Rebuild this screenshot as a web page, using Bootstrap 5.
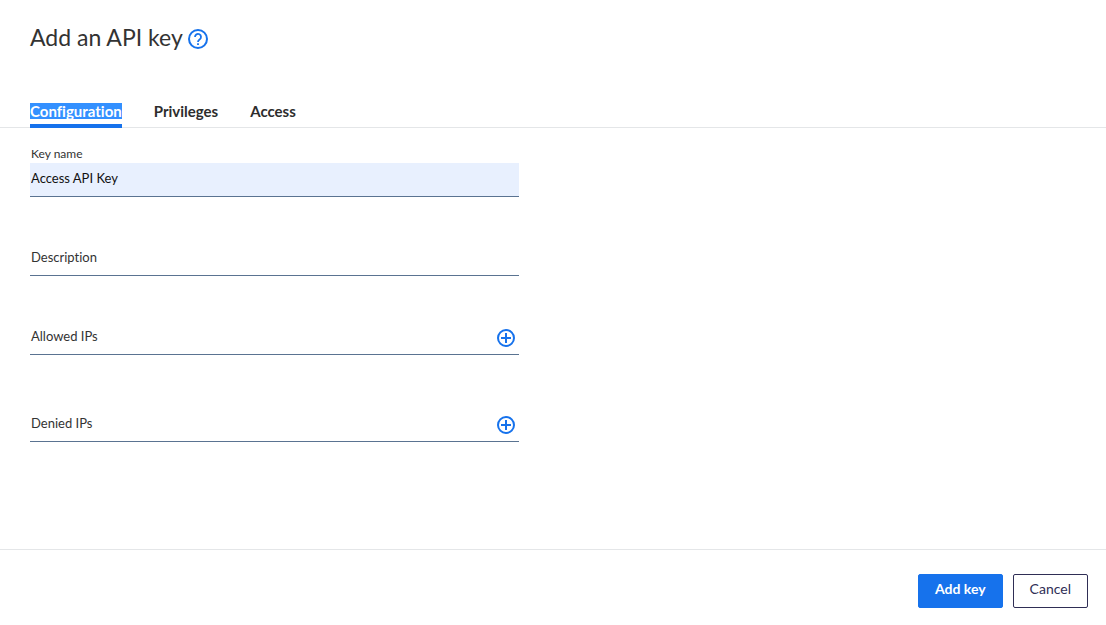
<!DOCTYPE html>
<html lang="en">
<head>
<meta charset="utf-8">
<meta name="viewport" content="width=device-width, initial-scale=1">
<title>Add an API key</title>
<link href="https://cdn.jsdelivr.net/npm/bootstrap@5.3.0/dist/css/bootstrap.min.css" rel="stylesheet">
<style>
  body { font-family: Lato, sans-serif; font-size: 13px; line-height: 20px; color: #333; font-variant-ligatures: none; }
  svg { display: block; }
  .page-head { padding: 21px 30px 0; gap: 5px; }
  .page-title { font-size: 23px; line-height: 32px; font-weight: 400; }
  .icon-btn { border: 0; background: none; padding: 0; color: #1672ec; }
  .tab-bar { margin-top: 48px; padding: 0 30px; gap: 32px; border-bottom: 1px solid #e4e6e8; }
  .tab-bar .nav-link { padding: 2px 0 5px; margin-bottom: -1px; font-size: 15px; line-height: 16px; font-weight: 700; color: #2d2d2d; border-bottom: 4px solid transparent; }
  .tab-bar .nav-link.active { border-bottom-color: #1672ec; color: #fff; }
  .picked { background: #3390ff; display: block; }
  .form-area { padding: 16px 34px 0 30px; }
  .form-area label { padding-left: 1px; }
  .top-label { font-size: 12px; line-height: 19px; display: block; }
  .line-field { height: 34px; border-bottom: 1px solid #5a7391; padding-bottom: 3px; margin-bottom: 45px; }
  .line-field.tall { margin-bottom: 53px; }
  .line-field input { border: 0; outline: 0; background: transparent; padding: 0 0 0 1px; min-width: 0; color: #111; }
  .line-field .icon-btn { margin: 3px 4px 0 0; }
  .filled { background: #e8f0fe; }
  .page-foot { border-top: 1px solid #e4e6e8; padding: 24px 18px 17px; gap: 10px; }
  .page-foot .btn { height: 34px; padding: 0 16px 4px; font-size: 14px; line-height: 20px; border-radius: 2px; }
  .btn-add { background: #1672ec; border-color: #1672ec; color: #fff; font-weight: 700; }
  .btn-cancel { background: #fff; border-color: #2f2e55; color: #2f2e55; }
</style>
</head>
<body class="d-flex flex-column min-vh-100">
<header>
  <div class="page-head d-flex align-items-center">
    <h1 class="page-title mb-0">Add an API key</h1>
    <button class="icon-btn mt-1" type="button" aria-label="Help">
      <svg width="20" height="20" viewBox="0 0 20 20" fill="none" stroke="currentColor" stroke-width="2"><circle cx="10" cy="10" r="9"/><path d="M7 8a3 3 0 1 1 4.600 2.500C10.500 11.200 10 11.600 10 13M10 14.200v1.900" stroke-width="1.800"/></svg>
    </button>
  </div>
  <nav class="nav tab-bar">
    <a class="nav-link active" href="#configuration" aria-current="page"><span class="picked">Configuration</span></a>
    <a class="nav-link" href="#privileges">Privileges</a>
    <a class="nav-link" href="#access">Access</a>
  </nav>
</header>
<main class="flex-grow-1">
  <form class="row g-0" id="key-form">
    <div class="col-6 form-area">
      <label class="top-label" for="key-name">Key name</label>
      <div class="line-field filled d-flex align-items-center">
        <input class="flex-grow-1" id="key-name" type="text" value="Access API Key">
      </div>
      <div class="line-field d-flex align-items-center">
        <label for="description">Description</label>
        <input class="flex-grow-1" id="description" type="text">
      </div>
      <div class="line-field tall d-flex align-items-center">
        <label for="allowed">Allowed IPs</label>
        <input class="flex-grow-1" id="allowed" type="text">
        <button class="icon-btn" type="button" aria-label="Add allowed IP">
          <svg width="18" height="18" viewBox="0 0 18 18" fill="none" stroke="currentColor" stroke-width="2"><circle cx="9" cy="9" r="8"/><path d="M9 4v10M4 9h10"/></svg>
        </button>
      </div>
      <div class="line-field d-flex align-items-center">
        <label for="denied">Denied IPs</label>
        <input class="flex-grow-1" id="denied" type="text">
        <button class="icon-btn" type="button" aria-label="Add denied IP">
          <svg width="18" height="18" viewBox="0 0 18 18" fill="none" stroke="currentColor" stroke-width="2"><circle cx="9" cy="9" r="8"/><path d="M9 4v10M4 9h10"/></svg>
        </button>
      </div>
    </div>
  </form>
</main>
<footer class="page-foot d-flex justify-content-end">
  <button class="btn btn-add" type="submit" form="key-form">Add key</button>
  <button class="btn btn-cancel" type="button">Cancel</button>
</footer>
<script src="https://cdn.jsdelivr.net/npm/bootstrap@5.3.0/dist/js/bootstrap.bundle.min.js"></script>
</body>
</html>
